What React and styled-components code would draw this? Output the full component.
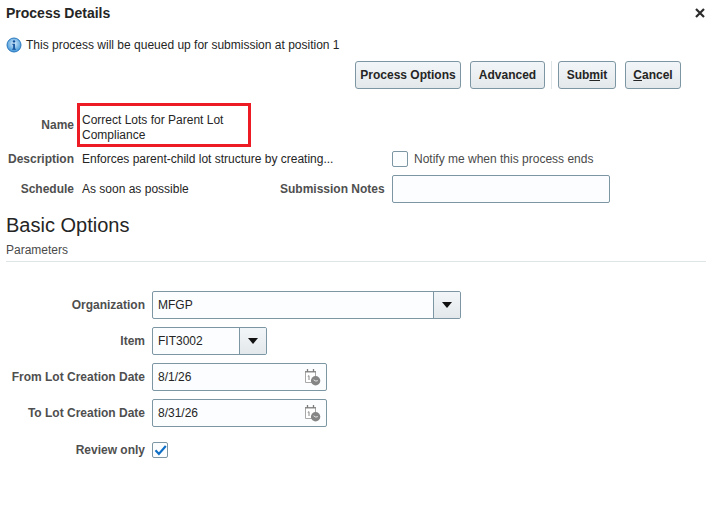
import React from 'react';
import styled, { createGlobalStyle } from 'styled-components';

const GlobalStyle = createGlobalStyle`
  html, body {
    margin: 0;
    background: #fff;
    font-family: "Liberation Sans", Arial, sans-serif;
    font-size: 12px;
    color: #252525;
  }
`;

const Page = styled.div`
  width: 714px;
  height: 526px;
  overflow: hidden;
  padding: 5px 8px 0 6px;
  box-sizing: border-box;
`;

const TitleBar = styled.div`
  display: flex;
  align-items: center;
  justify-content: space-between;
  height: 16px;
`;

const Title = styled.div`
  font-size: 14px;
  font-weight: bold;
  color: #252525;
`;

const Close = styled.svg`
  width: 10px;
  height: 10px;
  margin-right: 1px;
`;

const InfoRow = styled.div`
  display: flex;
  align-items: center;
  gap: 4px;
  margin-top: 16px;
  height: 16px;
`;

const Toolbar = styled.div`
  display: flex;
  align-items: center;
  margin: 8px 19px 0 349px;
  height: 28px;
`;

const Button = styled.button`
  height: 28px;
  padding: 0;
  width: ${p => p.$w}px;
  margin-left: ${p => p.$gap || 0}px;
  border: 1px solid #7d96a3;
  border-radius: 3px;
  background: linear-gradient(#f3f6f8, #e3e8eb);
  font-family: inherit;
  font-size: 12px;
  font-weight: bold;
  color: #252525;
`;

const Sep = styled.div`
  width: 1px;
  height: 28px;
  margin: 0 6px;
  background: #dfe4e7;
`;

const TopForm = styled.div`
  display: grid;
  grid-template-columns: 68px 1fr;
  margin-top: 14px;
`;

const Label = styled.div`
  font-weight: bold;
  color: #4f4f4f;
  text-align: right;
  white-space: nowrap;
  margin-top: ${p => p.$mt || 0}px;
`;

const NameLabel = styled(Label)`
  align-self: center;
`;

const NameBox = styled.div`
  width: 174px;
  height: 44px;
  margin-left: 3px;
  box-sizing: border-box;
  border: 3px solid #ed1c24;
  padding: 7px 0 0 2px;
  line-height: 15px;
`;

const TopRow = styled.div`
  display: grid;
  grid-template-columns: 68px 318px 1fr;
  align-items: center;
  height: ${p => p.$h}px;
  margin-top: ${p => p.$mt || 0}px;
`;

const Value = styled.div`
  padding-left: 8px;
  white-space: nowrap;
`;

const Notes = styled.div`
  display: flex;
  align-items: center;
  gap: 8px;
  justify-content: flex-start;
  margin-left: -112px;
`;

const NotesLabel = styled(Label)`
  width: 104px;
  flex: none;
`;

const CheckRow = styled.div`
  display: flex;
  align-items: center;
  gap: 6px;
  color: #4a4a4a;
`;

const Box = styled.div`
  width: 16px;
  height: 16px;
  margin-top: ${p => p.$mt || 0}px;
  box-sizing: border-box;
  border: 1px solid #7d96a3;
  border-radius: 2px;
  background: #fbfdfe;
  display: flex;
  align-items: center;
  justify-content: center;
`;

const Field = styled.div`
  display: flex;
  align-items: center;
  width: ${p => p.$w}px;
  height: 28px;
  box-sizing: border-box;
  border: 1px solid #7d96a3;
  border-radius: 2px;
  background: #fbfdfe;
  overflow: hidden;
`;

const FieldText = styled.div`
  flex: 1;
  padding-left: 5px;
  color: #252525;
`;

const DropButton = styled.div`
  width: 26px;
  height: 100%;
  border-left: 1px solid #7d96a3;
  background: linear-gradient(#f3f6f8, #e3e8eb);
  display: flex;
  align-items: center;
  justify-content: center;
  &::after {
    content: "";
    border-left: 5px solid transparent;
    border-right: 5px solid transparent;
    border-top: 6px solid #111;
  }
`;

const CalIcon = styled.svg`
  width: 18px;
  height: 18px;
  margin-right: 5px;
  margin-top: -1px;
`;

const Heading = styled.h2`
  margin: 10px 0 0;
  font-size: 20px;
  line-height: 24px;
  font-weight: normal;
  color: #252525;
`;

const SubHeading = styled.div`
  margin-top: 6px;
  line-height: 14px;
  color: #4a4a4a;
  padding-bottom: 4px;
  border-bottom: 1px solid #dfe4e7;
`;

const Params = styled.div`
  display: grid;
  grid-template-columns: 139px 1fr;
  column-gap: 7px;
  row-gap: 8px;
  align-items: center;
  margin-top: 29px;
`;

const Calendar = () => (
  <CalIcon viewBox="0 0 18 18">
    <path d="M2.5 3.5h10v11h-10z" fill="#fff" stroke="#a8a8a8" />
    <path d="M2 3h11v1.6H2z" fill="#8e8e8e" />
    <path d="M4.5 1v3M10.5 1v3" stroke="#7c7c7c" strokeWidth="1.3" />
    <path d="M4.8 8.4l1.2-.7V12" stroke="#888" strokeWidth="1" fill="none" />
    <circle cx="12.6" cy="12.8" r="4.7" fill="#858585" />
    <path d="M10.6 11.8l2.2 1.3 2-.5" stroke="#e8e8e8" strokeWidth="1" fill="none" />
  </CalIcon>
);

const Check = () => (
  <svg width="13" height="12" viewBox="0 0 13 12">
    <path d="M1.5 6.3l3.4 3.6L11.8 2" stroke="#0f6fc6" strokeWidth="2.2" fill="none" />
  </svg>
);

const InfoIcon = () => (
  <svg width="16" height="16" viewBox="0 0 16 16">
    <defs>
      <radialGradient id="inf" cx="50%" cy="40%" r="60%">
        <stop offset="0%" stopColor="#d6ecfb" />
        <stop offset="100%" stopColor="#3f95d8" />
      </radialGradient>
    </defs>
    <circle cx="8" cy="8" r="7" fill="url(#inf)" stroke="#2a78bd" />
    <circle cx="8" cy="4.4" r="1.2" fill="#0e4f9a" />
    <path d="M6.3 6.7h2.6v5h1v1H6.2v-1h1v-4h-.9z" fill="#0e4f9a" />
  </svg>
);

const App = () => {
  return (
    <Page>
      <GlobalStyle />
      <TitleBar>
        <Title>Process Details</Title>
        <Close viewBox="0 0 10 10">
          <path d="M1 1l8 8M9 1l-8 8" stroke="#2b2b2b" strokeWidth="2.2" />
        </Close>
      </TitleBar>
      <InfoRow>
        <InfoIcon />
        <span>This process will be queued up for submission at position 1</span>
      </InfoRow>
      <Toolbar>
        <Button $w={106}>Process Options</Button>
        <Button $w={75} $gap={9}>Advanced</Button>
        <Sep />
        <Button $w={58}>Sub<u>m</u>it</Button>
        <Button $w={56} $gap={9}><u>C</u>ancel</Button>
      </Toolbar>
      <TopForm>
        <NameLabel>Name</NameLabel>
        <NameBox>Correct Lots for Parent Lot Compliance</NameBox>
      </TopForm>
      <TopRow $h={22} $mt={1}>
        <Label>Description</Label>
        <Value>Enforces parent-child lot structure by creating...</Value>
        <CheckRow>
          <Box />
          Notify me when this process ends
        </CheckRow>
      </TopRow>
      <TopRow $h={28} $mt={5}>
        <Label>Schedule</Label>
        <Value>As soon as possible</Value>
        <Notes>
          <NotesLabel>Submission Notes</NotesLabel>
          <Field $w={218} />
        </Notes>
      </TopRow>
      <Heading>Basic Options</Heading>
      <SubHeading>Parameters</SubHeading>
      <Params>
        <Label>Organization</Label>
        <Field $w={309}>
          <FieldText>MFGP</FieldText>
          <DropButton />
        </Field>
        <Label>Item</Label>
        <Field $w={115}>
          <FieldText>FIT3002</FieldText>
          <DropButton />
        </Field>
        <Label>From Lot Creation Date</Label>
        <Field $w={175}>
          <FieldText>8/1/26</FieldText>
          <Calendar />
        </Field>
        <Label>To Lot Creation Date</Label>
        <Field $w={175}>
          <FieldText>8/31/26</FieldText>
          <Calendar />
        </Field>
        <Label $mt={6}>Review only</Label>
        <Box $mt={7}><Check /></Box>
      </Params>
    </Page>
  );
};

export default App;
